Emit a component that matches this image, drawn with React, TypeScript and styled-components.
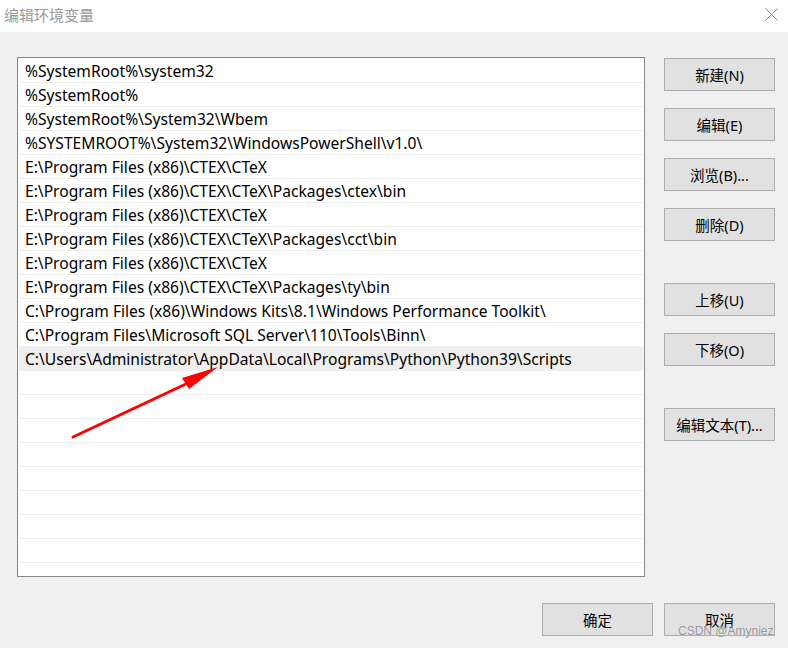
import React from "react";
import styled, { createGlobalStyle } from "styled-components";

const GlobalStyle = createGlobalStyle`
  html, body {
    margin: 0;
    padding: 0;
    background: #f0f0f0;
  }
  * {
    box-sizing: border-box;
  }
`;

const Window = styled.div`
  position: relative;
  width: 788px;
  height: 648px;
  background: #f0f0f0;
  font-family: "Noto Sans", "Noto Sans CJK SC", sans-serif;
  overflow: hidden;
  display: flex;
  flex-direction: column;
`;

const TitleBar = styled.div`
  height: 32px;
  background: #ffffff;
  display: flex;
  align-items: center;
  justify-content: space-between;
  padding: 0 10px 4px 4px;
`;

const Title = styled.span`
  font-family: "Noto Sans CJK SC", sans-serif;
  font-size: 15px;
  color: #999999;
`;

const CloseButton = styled.div`
  width: 14px;
  height: 14px;
  display: flex;
  align-items: center;
  justify-content: center;
`;

const Body = styled.div`
  display: flex;
  padding: 25px 0 0 17px;
  gap: 19px;
`;

const ListBox = styled.div`
  width: 628px;
  height: 520px;
  background: #ffffff;
  border: 1px solid #828790;
  padding: 1px 1px 0 1px;
  overflow: hidden;
`;

const Row = styled.div<{ $selected?: boolean }>`
  height: 24px;
  border-bottom: 1px solid #efefef;
  background: ${(p) => (p.$selected ? "#efefef" : "transparent")};
  padding: 1px 0 0 6px;
  font-size: 15.6px;
  line-height: 22px;
  color: #000000;
  white-space: nowrap;
`;

const ButtonColumn = styled.div`
  display: flex;
  flex-direction: column;
  padding-top: 1px;
`;

const Button = styled.button<{ $gap?: number }>`
  width: 111px;
  height: 33px;
  margin-top: ${(p) => p.$gap ?? 0}px;
  background: #e1e1e1;
  border: 1px solid #adadad;
  font-family: "Noto Sans", "Noto Sans CJK SC", sans-serif;
  font-size: 14.5px;
  color: #000000;
  padding: 0;
  cursor: default;
`;

const Footer = styled.div`
  display: flex;
  justify-content: flex-end;
  gap: 11px;
  padding: 26px 13px 0 0;
`;

const Arrow = styled.svg`
  position: absolute;
  left: 0;
  top: 0;
  pointer-events: none;
`;

const Watermark = styled.div`
  position: absolute;
  left: 678px;
  top: 624px;
  font-family: "Liberation Sans", sans-serif;
  font-size: 12px;
  color: rgba(120, 120, 120, 0.75);
  text-shadow: 0 0 1px rgba(255, 255, 255, 0.6);
  pointer-events: none;
`;

const paths = [
  "%SystemRoot%\\system32",
  "%SystemRoot%",
  "%SystemRoot%\\System32\\Wbem",
  "%SYSTEMROOT%\\System32\\WindowsPowerShell\\v1.0\\",
  "E:\\Program Files (x86)\\CTEX\\CTeX",
  "E:\\Program Files (x86)\\CTEX\\CTeX\\Packages\\ctex\\bin",
  "E:\\Program Files (x86)\\CTEX\\CTeX",
  "E:\\Program Files (x86)\\CTEX\\CTeX\\Packages\\cct\\bin",
  "E:\\Program Files (x86)\\CTEX\\CTeX",
  "E:\\Program Files (x86)\\CTEX\\CTeX\\Packages\\ty\\bin",
  "C:\\Program Files (x86)\\Windows Kits\\8.1\\Windows Performance Toolkit\\",
  "C:\\Program Files\\Microsoft SQL Server\\110\\Tools\\Binn\\",
  "C:\\Users\\Administrator\\AppData\\Local\\Programs\\Python\\Python39\\Scripts",
];

const rows = [...paths, ...Array(9).fill("")];

export default function App() {
  return (
    <Window>
      <GlobalStyle />
      <TitleBar>
        <Title>编辑环境变量</Title>
        <CloseButton>
          <svg width="13" height="13" viewBox="0 0 13 13">
            <path d="M0.5 0.5 L12.5 12.5 M12.5 0.5 L0.5 12.5" stroke="#8a8a8a" strokeWidth="1" />
          </svg>
        </CloseButton>
      </TitleBar>

      <Body>
        <ListBox>
          {rows.map((p, i) => (
            <Row key={i} $selected={i === paths.length - 1}>
              {p}
            </Row>
          ))}
        </ListBox>
        <ButtonColumn>
          <Button>新建(N)</Button>
          <Button $gap={17}>编辑(E)</Button>
          <Button $gap={17}>浏览(B)...</Button>
          <Button $gap={17}>删除(D)</Button>
          <Button $gap={42}>上移(U)</Button>
          <Button $gap={17}>下移(O)</Button>
          <Button $gap={42}>编辑文本(T)...</Button>
        </ButtonColumn>
      </Body>

      <Footer>
        <Button>确定</Button>
        <Button>取消</Button>
      </Footer>

      <Arrow width="788" height="648">
        <line x1="73" y1="437" x2="188" y2="383" stroke="#ff0000" strokeWidth="3" strokeLinecap="round" />
        <polygon points="218,367 182,378 189,389" fill="#ff0000" />
      </Arrow>

      <Watermark>CSDN @Amyniez</Watermark>
    </Window>
  );
}
